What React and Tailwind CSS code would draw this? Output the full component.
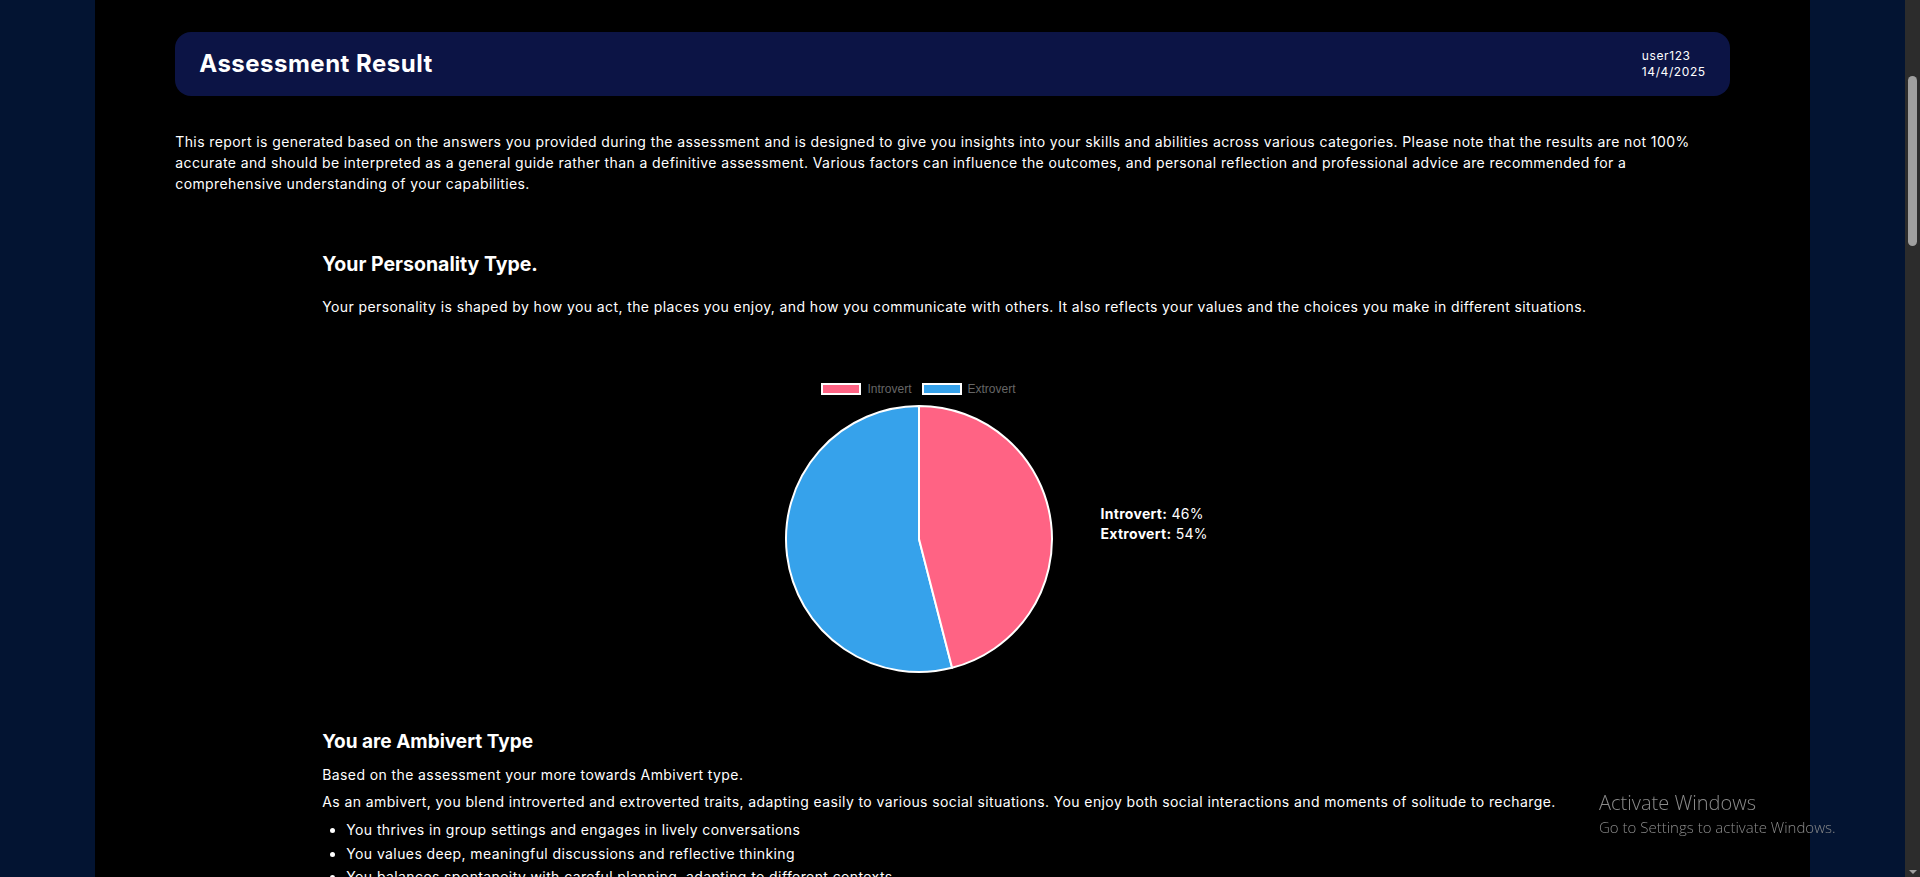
import React from 'react'

const INTROVERT = 46
const EXTROVERT = 54

function PieChart({size = 270, value = INTROVERT}) {
  const c = size / 2
  const r = 133
  const a = (value / 100) * Math.PI * 2
  const x = c + r * Math.sin(a)
  const y = c - r * Math.cos(a)
  const large = value > 50 ? 1 : 0
  return (
    <svg width={size} height={size} viewBox={`0 0 ${size} ${size}`}>
      <path
        d={`M${c} ${c} L${x} ${y} A${r} ${r} 0 ${1 - large} 1 ${c} ${c - r} Z`}
        fill="#36a2eb"
        stroke="#fff"
        strokeWidth="2"
        strokeLinejoin="round"
      />
      <path
        d={`M${c} ${c} L${c} ${c - r} A${r} ${r} 0 ${large} 1 ${x} ${y} Z`}
        fill="#ff6384"
        stroke="#fff"
        strokeWidth="2"
        strokeLinejoin="round"
      />
    </svg>
  )
}

function Legend() {
  const items = [
    {label: 'Introvert', color: 'bg-[#ff6384]'},
    {label: 'Extrovert', color: 'bg-[#36a2eb]'},
  ]
  return (
    <div className="flex items-center justify-center gap-[10px] font-['Liberation_Sans',Arial,sans-serif] text-[12px] leading-3 tracking-normal text-[#666]">
      {items.map(({label, color}) => (
        <div key={label} className="flex items-center gap-[6px]">
          <span className={`block w-[40px] h-[12px] border-2 border-white ${color}`} />
          <span>{label}</span>
        </div>
      ))}
    </div>
  )
}

// window scrollbar as it shows in the capture
function ScrollBar() {
  return (
    <div className="w-[15px] shrink-0 bg-[#2c2c2c] flex flex-col items-center justify-between pt-[76px] pb-[3px]">
      <div className="w-[9px] h-[170px] rounded-full bg-[#9f9f9f]" />
      <div className="w-0 h-0 border-x-[4px] border-x-transparent border-t-[4px] border-t-[#9f9f9f]" />
    </div>
  )
}

export default function App() {
  return (
    <div className="flex h-screen overflow-hidden bg-[#031432] font-['Inter',sans-serif] text-white">
      <main className="flex-1 min-w-0 overflow-y-auto [scrollbar-width:none]">
        <div className="w-[90%] mx-auto bg-black px-20 pt-8 pb-24 tracking-[0.4px]">
          <div className="flex items-center justify-between rounded-2xl bg-[#0c1445] px-6 py-4">
            <h1 className="text-2xl font-bold leading-8 tracking-[0.5px]">Assessment Result</h1>
            <div className="text-xs leading-4 tracking-[0.6px]">
              <p>user123</p>
              <p>14/4/2025</p>
            </div>
          </div>

          <p className="mt-[35px] text-sm leading-[21px]">
            This report is generated based on the answers you provided during the
            assessment and is designed to give you insights into your skills and
            abilities across various categories. Please note that the results are
            not 100% accurate and should be interpreted as a general guide rather
            than a definitive assessment. Various factors can influence the
            outcomes, and personal reflection and professional advice are
            recommended for a comprehensive understanding of your capabilities.
          </p>

          <section className="ml-[147px] mr-[127px] mt-[56px]">
            <h2 className="text-[19.5px] font-bold leading-7 tracking-normal">Your Personality Type.</h2>
            <p className="mt-[18px] text-sm leading-[21px]">
              Your personality is shaped by how you act, the places you enjoy, and
              how you communicate with others. It also reflects your values and the
              choices you make in different situations.
            </p>

            <div className="mt-[66px] flex items-center justify-center pl-[44px]">
              <div className="w-[300px] flex flex-col items-center">
                <Legend />
                <div className="mt-[9px]">
                  <PieChart />
                </div>
              </div>
              <div className="ml-8 mb-[10px] w-[100px] whitespace-nowrap text-sm leading-5 tracking-[0.3px]">
                <p>
                  <span className="font-bold">Introvert:</span> {INTROVERT}%
                </p>
                <p>
                  <span className="font-bold">Extrovert:</span> {EXTROVERT}%
                </p>
              </div>
            </div>

            <h3 className="mt-[54px] text-[19px] font-bold leading-7 tracking-normal">You are Ambivert Type</h3>
            <p className="mt-2 text-sm leading-[21px]">
              Based on the assessment your more towards Ambivert type.
            </p>
            <p className="mt-1.5 text-sm leading-[21px]">
              As an ambivert, you blend introverted and extroverted traits, adapting
              easily to various social situations. You enjoy both social interactions
              and moments of solitude to recharge.
            </p>
            <ul className="mt-[7px] list-disc pl-6 text-sm leading-[21px]">
              <li className="mb-[2.5px]">You thrives in group settings and engages in lively conversations</li>
              <li className="mb-[2.5px]">You values deep, meaningful discussions and reflective thinking</li>
              <li className="mb-[2.5px]">You balances spontaneity with careful planning, adapting to different contexts</li>
            </ul>
          </section>
        </div>
      </main>
      <ScrollBar />

      <div className="fixed left-[1599px] top-[789px] font-['Open_Sans',sans-serif] font-light text-[#8b8b8b] pointer-events-none">
        <p className="text-[20px] leading-7">Activate Windows</p>
        <p className="text-[15px] leading-5">Go to Settings to activate Windows.</p>
      </div>
    </div>
  )
}
